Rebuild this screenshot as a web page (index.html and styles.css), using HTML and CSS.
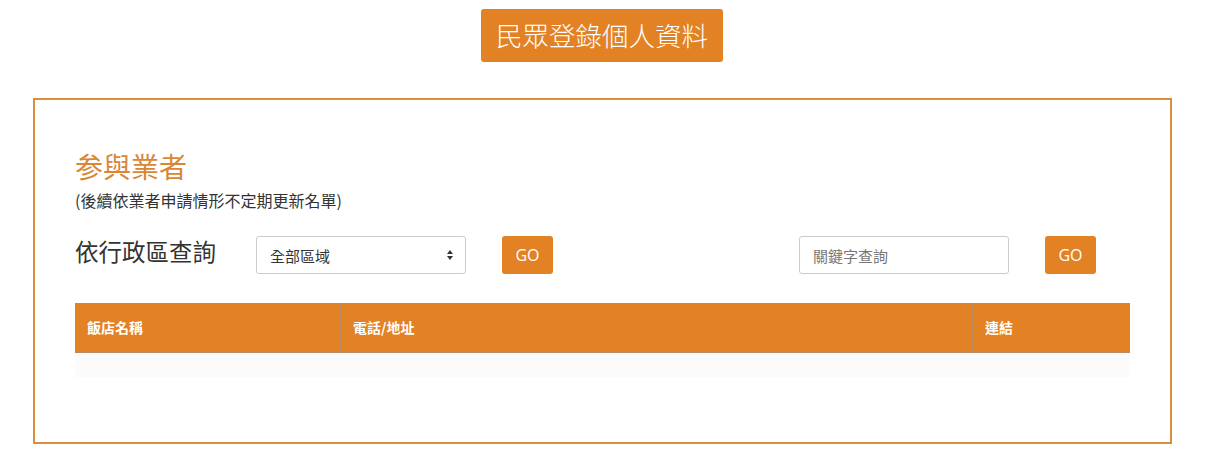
FILE: index.html
```html
<!DOCTYPE html>
<html lang="zh-Hant">
<head>
    <meta charset="UTF-8">
    <meta name="viewport" content="width=device-width, initial-scale=1.0">
    <title>参與業者</title>
    <link rel="stylesheet" href="styles.css">
</head>
<body>

    <div id="top">
        <a class="btn-register" href="#">民眾登錄個人資料</a>
    </div>

    <div id="shopbox">
        <h2 class="title">参與業者</h2>
        <p class="note">(後續依業者申請情形不定期更新名單)</p>

        <div class="search-row">
            <div class="search-area">
                <span class="search-label">依行政區查詢</span>
                <div class="select-wrap">
                    <select class="form-control">
                        <option>全部區域</option>
                    </select>
                    <span class="arrows"></span>
                </div>
                <button class="btn-go">GO</button>
            </div>
            <div class="search-key">
                <input type="text" class="form-control" placeholder="關鍵字查詢">
                <button class="btn-go">GO</button>
            </div>
        </div>

        <table class="shop-table">
            <thead>
                <tr>
                    <th class="col-name">飯店名稱</th>
                    <th class="col-addr">電話/地址</th>
                    <th class="col-link">連結</th>
                </tr>
            </thead>
            <tbody>
                <tr><td></td><td></td><td></td></tr>
            </tbody>
        </table>
    </div>

</body>
</html>
```

FILE: styles.css
```css
body {
    font-family: "Open Sans", "Noto Sans CJK TC", sans-serif;
    background-color: #fff;
    margin: 0;
    padding: 0;
    color: #333;
    overflow: hidden;
}

#top {
    display: flex;
    justify-content: center;
    padding-top: 9px;
    padding-right: 24px;
}

.btn-register {
    display: block;
    width: 242px;
    height: 53px;
    line-height: 51px;
    text-align: center;
    background-color: #e38125;
    color: #fff;
    font-size: 26.5px;
    border-radius: 3px;
    text-decoration: none;
    font-family: "Noto Sans CJK TC", sans-serif;
    font-weight: 300;
}

#shopbox {
    box-sizing: border-box;
    width: 1139px;
    margin: 36px 0 0 33px;
    height: 346px;
    border: 2px solid #d98e3d;
    padding: 47px 40px 0 40px;
}

.title {
    font-family: "Noto Sans CJK TC", sans-serif;
    font-weight: 400;
    font-size: 28px;
    color: #d98736;
    margin: 0;
    line-height: 38px;
}

.note {
    font-family: "Noto Sans CJK TC", sans-serif;
    font-size: 16px;
    margin: 5px 0 0 0;
    line-height: 21px;
    color: #333;
}

.search-row {
    display: flex;
    align-items: center;
    margin-top: 25px;
    height: 38px;
}

.search-area {
    display: flex;
    align-items: center;
    width: 724px;
}

.search-label {
    font-family: "Noto Sans CJK TC", sans-serif;
    font-size: 23.5px;
    width: 181px;
    color: #333;
    position: relative;
    top: -4px;
}

.select-wrap {
    position: relative;
    width: 210px;
}

.form-control {
    box-sizing: border-box;
    height: 38px;
    width: 210px;
    border: 1px solid #ccc;
    border-radius: 3px;
    background-color: #fff;
    font-family: "Noto Sans CJK TC", sans-serif;
    font-size: 15px;
    color: #333;
    padding: 0 13px;
    outline: none;
}

select.form-control {
    appearance: none;
    -webkit-appearance: none;
}

.form-control::placeholder {
    color: #777;
}

.arrows {
    position: absolute;
    right: 13px;
    top: 14px;
    width: 0;
    height: 0;
    border-left: 3.5px solid transparent;
    border-right: 3.5px solid transparent;
    border-bottom: 4px solid #333;
}

.arrows::after {
    content: "";
    position: absolute;
    left: -3.5px;
    top: 6px;
    border-left: 3.5px solid transparent;
    border-right: 3.5px solid transparent;
    border-top: 4px solid #333;
}

.btn-go {
    height: 38px;
    width: 51px;
    margin-left: 36px;
    border: none;
    border-radius: 3px;
    background-color: #e38125;
    color: #fff;
    font-family: "Open Sans", sans-serif;
    font-size: 16px;
    cursor: pointer;
}

.search-key {
    display: flex;
    align-items: center;
}

.shop-table {
    width: 1055px;
    table-layout: fixed;
    margin-top: 29px;
    border-collapse: separate;
    border-spacing: 0;
}

.shop-table th {
    height: 50px;
    background-color: #e38125;
    color: #fff;
    text-align: left;
    font-family: "Noto Sans CJK TC", sans-serif;
    font-weight: 700;
    font-size: 14px;
    padding: 0 12px;
    border-bottom: 2px solid #b98a63;
    box-sizing: border-box;
}

.shop-table th + th {
    border-left: 1px solid #bf8c60;
}

.col-name {
    width: 265px;
}

.col-addr {
    width: 632px;
}

.col-link {
    width: 158px;
}

.shop-table td {
    height: 24px;
    background-color: #fbfbfb;
    padding: 0;
}
```
